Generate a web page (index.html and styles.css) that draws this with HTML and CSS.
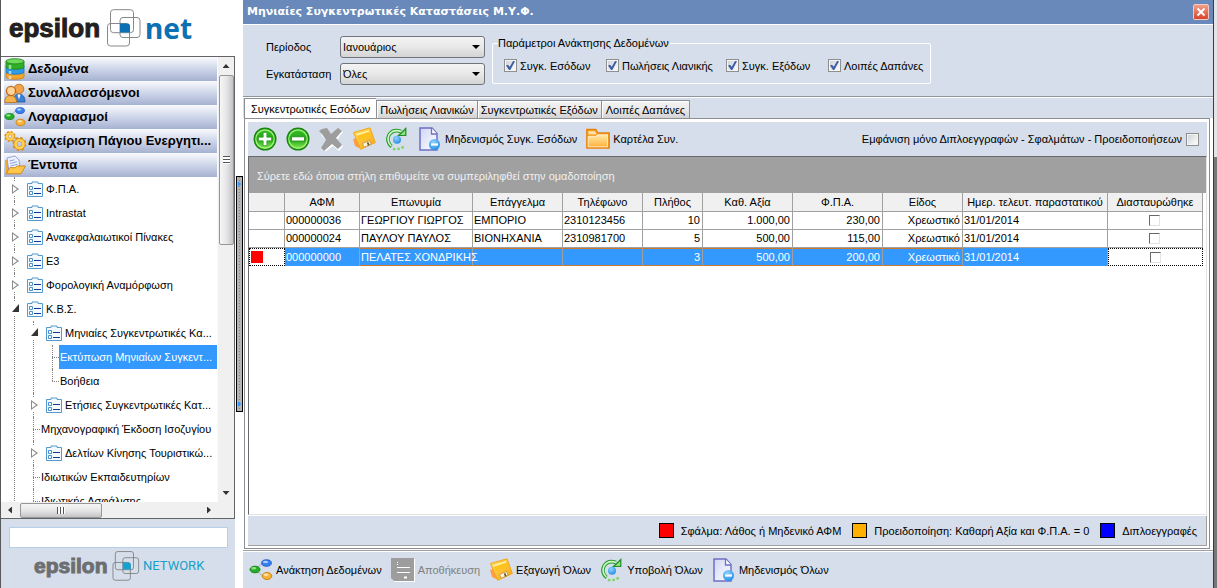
FILE: index.html
```html
<!DOCTYPE html>
<html lang="el">
<head>
<meta charset="utf-8">
<title>Μηνιαίες Συγκεντρωτικές Καταστάσεις Μ.Υ.Φ.</title>
<link rel="stylesheet" href="styles.css">
</head>
<body>
<svg class="sprite" aria-hidden="true">
  <defs>
    <linearGradient id="g-green" x1="0" y1="0" x2="0" y2="1"><stop offset="0" stop-color="#3ec531"/><stop offset=".5" stop-color="#1fa314"/><stop offset="1" stop-color="#8df05a"/></linearGradient>
    <linearGradient id="g-gold" x1="0" y1="0" x2="1" y2="1"><stop offset="0" stop-color="#ffe066"/><stop offset="1" stop-color="#f7a50f"/></linearGradient>
    <linearGradient id="g-page" x1="0" y1="0" x2="1" y2="1"><stop offset="0" stop-color="#cfd6f5"/><stop offset="1" stop-color="#ffffff"/></linearGradient>
    <linearGradient id="g-folder" x1="0" y1="0" x2="0" y2="1"><stop offset="0" stop-color="#ffe9a8"/><stop offset="1" stop-color="#ffb23c"/></linearGradient>
    <radialGradient id="g-blue" cx=".4" cy=".3" r=".8"><stop offset="0" stop-color="#8fd3ff"/><stop offset="1" stop-color="#1b86e0"/></radialGradient>
  </defs>
  <symbol id="i-add" viewBox="0 0 24 24"><circle cx="12" cy="12" r="10.8" fill="url(#g-green)" stroke="#17850f" stroke-width="1.4"/><circle cx="12" cy="12" r="9.2" fill="none" stroke="#a5f07c" stroke-width="1.2"/><path d="M10.2 5.500h3.600v4.700h4.700v3.600h-4.700v4.700h-3.600v-4.700H5.500v-3.600h4.700z" fill="#fff" stroke="#1f8d16" stroke-width=".6"/></symbol>
  <symbol id="i-minus" viewBox="0 0 24 24"><circle cx="12" cy="12" r="10.8" fill="url(#g-green)" stroke="#17850f" stroke-width="1.4"/><circle cx="12" cy="12" r="9.2" fill="none" stroke="#a5f07c" stroke-width="1.2"/><path d="M5.500 9.800h13v4.200h-13z" fill="#fff" stroke="#1f8d16" stroke-width=".8"/></symbol>
  <symbol id="i-delete" viewBox="0 0 24 24"><path d="M1 4l5-3 6 6 7-6 4 3-6 8 6 6-4 5-6-5-8 6-4-3 6-8-5-5z" transform="translate(1 1)" fill="#fff"/><path d="M0 4l3-2 5-1 4 6 7-6 4 3-6 7 6 7-4 4-6-5-8 7-3-3 5-8-4-6z" fill="#9d9d9d"/></symbol>
  <symbol id="i-save" viewBox="0 0 24 24"><path d="M1 12l4-1 5 9-3 1-4-2z" fill="#ff9d45"/><path d="M1.500 5.500L18 .8l5.300 14.700-14.800 6.800z" fill="url(#g-gold)" stroke="#f3a617"/><path d="M4 7L17 3l2.300 6-12 5z" fill="#ffc21f"/><path d="M4 7L17 3l.6 1.500L4.800 8.800z" fill="#fff3a6"/><path d="M10.500 16.500l7-3 1.700 3.700-7 3z" fill="#fff6da" stroke="#a87a20" stroke-width=".6"/><path d="M14.800 15.800l1.600-.7 1.200 2.900-1.600.7z" fill="#6b552c"/></symbol>
  <symbol id="i-refresh" viewBox="0 0 24 24"><path d="M6.500 19.500A9 9 0 0 1 4 8Q8 1.500 16 4.500" fill="none" stroke="#259c2c" stroke-width="3.600"/><path d="M6.300 19A9 9 0 0 1 4 8Q8 1.700 16 4.500" fill="none" stroke="#d2f7c6" stroke-width="1.600"/><path d="M20.800 1.500v7H13.500l3-2.800z" fill="#8fe07a" stroke="#1e8e26" stroke-width="1.200"/><circle cx="12" cy="12.800" r="4" fill="url(#g-blue)"/><path d="M8 21.800q6 1.500 12-3" fill="none" stroke="#7bd35c" stroke-width="2.400" stroke-dasharray="2.400 2"/></symbol>
  <symbol id="i-page" viewBox="0 0 24 24"><path d="M2 1h12l5 5.500V23H2z" fill="url(#g-page)" stroke="#6d6fc4" stroke-width="1.500"/><path d="M13.500 1v6H19" fill="#fff" stroke="#6d6fc4" stroke-width="1.300"/><circle cx="16.500" cy="17.500" r="5.500" fill="url(#g-blue)"/><path d="M13 17.500h7" stroke="#fff" stroke-width="2.200"/></symbol>
  <symbol id="i-folder" viewBox="0 0 24 24"><path d="M.8 21V2.500h9l2 3.500h11.400v15z" fill="#f7a52d" stroke="#e5820c" stroke-width="1.300"/><path d="M2.500 4.200h6.500l1.500 3H2.500z" fill="#ffe2ad"/><path d="M2.200 9.500h7.500l2-1.700h9.800v12H2.200z" fill="url(#g-folder)" stroke="#fff4d8" stroke-width=".8"/></symbol>
  <symbol id="i-nodes" viewBox="0 0 24 24"><path d="M17 5.500C11 5 10 8 8 12c2 4 4 6 9 6" fill="none" stroke="#b9c4cf" stroke-width="1.600"/><ellipse cx="6" cy="11.500" rx="5" ry="3.300" fill="#27ab2a" stroke="#14851a"/><ellipse cx="4.800" cy="10.300" rx="2.500" ry="1.200" fill="#8be57e"/><ellipse cx="17.500" cy="5" rx="4.800" ry="3.200" fill="#3c7ff0" stroke="#215cc9"/><ellipse cx="16.500" cy="3.900" rx="2.500" ry="1.200" fill="#acd0ff"/><ellipse cx="18" cy="18" rx="4.800" ry="3.500" fill="#f6b13a" stroke="#cf8213"/><ellipse cx="17" cy="16.800" rx="2.500" ry="1.200" fill="#ffe3a4"/></symbol>
  <symbol id="i-disk" viewBox="0 0 24 24"><path d="M1 1h23v23H3z" fill="#fff"/><path d="M0 0h23v23H3l-3-3z" fill="#9d9d9d"/><path d="M6 9.500h13M6 14.500h13" stroke="#fff"/><path d="M13 18.500h3v2h-3zM6 4h1v1H6zM6 6h1v1H6z" fill="#fff"/></symbol>
  <symbol id="i-db" viewBox="0 0 20 22"><path d="M1 14h18v5c0 3-18 3-18 0z" fill="#f2a72c" stroke="#c77d12" stroke-width=".8"/><path d="M1 8h18v6c0 3-18 3-18 0z" fill="#2f9be6" stroke="#1a6fb5" stroke-width=".8"/><path d="M1 3h18v6c0 3-18 3-18 0z" fill="#2fae28" stroke="#1b8418" stroke-width=".8"/><ellipse cx="10" cy="3.300" rx="9" ry="2.600" fill="#6fd95a" stroke="#1b8418" stroke-width=".8"/><path d="M5 7v4M5 13v3M5 18v3" stroke="#ffffff90" stroke-width="2.500"/></symbol>
  <symbol id="i-users" viewBox="0 0 22 20"><path d="M9 19c0-6 3-8 6-8s6 2 6 8z" fill="#3d7fd0" stroke="#1e5aa3" stroke-width=".8"/><circle cx="15" cy="6" r="4.800" fill="#f1a24a" stroke="#b96614" stroke-width=".8"/><path d="M13.500 11.500l1.500 5 1.500-5z" fill="#fff"/><path d="M.8 19.500c0-6 3-7 5.700-7s6 1.500 6 7z" fill="#f5b34d" stroke="#bf6d14" stroke-width=".8"/><circle cx="7" cy="8" r="4.600" fill="#ffd29a" stroke="#bf6d14" stroke-width="1.300"/></symbol>
  <symbol id="i-gears" viewBox="0 0 22 20"><circle cx="6" cy="5.500" r="4.600" fill="none" stroke="#dd8f10" stroke-width="2" stroke-dasharray="2 1.610"/><circle cx="6" cy="5.500" r="3.100" fill="none" stroke="#dd8f10" stroke-width="3"/><circle cx="6" cy="5.500" r="3" fill="none" stroke="#ffd35a" stroke-width="2"/><circle cx="15.500" cy="13" r="6" fill="none" stroke="#dd8f10" stroke-width="2.200" stroke-dasharray="2.500 2.210"/><circle cx="15.500" cy="13" r="4.200" fill="none" stroke="#dd8f10" stroke-width="3.800"/><circle cx="15.500" cy="13" r="4" fill="none" stroke="#ffd35a" stroke-width="2.500"/></symbol>
  <symbol id="i-forms" viewBox="0 0 22 20"><path d="M1 5h4l2 13H2z" fill="#e9a63b"/><path d="M3 3l8-2 4 4 1 9-11 3z" fill="#eef2ff" stroke="#8b9ad0" stroke-width=".9"/><path d="M5.500 6l5-1.200M6 8.500l7-1.700M6.500 11l7-1.700" stroke="#8fa0d6"/><path d="M2 18.800l4-6.300 5 .3 2-1.800h8.500L17 18.800z" fill="#ffc64a" stroke="#c8841a" stroke-width=".9"/></symbol>
  <symbol id="i-list" viewBox="0 0 16 16"><path d="M.5 15.500V2.500h4.500v-1.500h6v1.500h4.500v13z" fill="#f5faff" stroke="#559bcf"/><path d="M2.500 5.500h3v3h-3zM2.500 10.500h3v3h-3z" fill="#fff" stroke="#4b93cb"/><path d="M7 7.500h7M7 12.500h7" stroke="#123c94"/></symbol>
  <symbol id="i-brand" viewBox="0 0 34 38"><g fill="none" stroke="currentColor"><rect x="3.500" y=".7" width="23" height="23" rx="3"/><rect x="13" y="8.500" width="20" height="20" rx="3"/><rect x=".5" y="14.500" width="22" height="22.500" rx="3"/></g><path d="M13 14.500h7q3 0 3 3v6H13z"/></symbol>
</svg>

<div class="app">
  <aside class="sidebar">
    <div class="brand">
      <span class="brand-name">epsilon</span>
      <svg class="brand-mark"><use href="#i-brand"/></svg>
      <span class="brand-suffix">net</span>
    </div>

    <div class="tree-box">
      <div class="tree-main">
        <nav class="tree" aria-label="Μενού">
          <ul class="groups">
            <li><button class="group"><svg><use href="#i-db"/></svg>Δεδομένα</button></li>
            <li><button class="group"><svg><use href="#i-users"/></svg>Συναλλασσόμενοι</button></li>
            <li><button class="group"><svg><use href="#i-nodes"/></svg>Λογαριασμοί</button></li>
            <li><button class="group"><svg><use href="#i-gears"/></svg>Διαχείριση Πάγιου Ενεργητι...</button></li>
            <li><button class="group"><svg><use href="#i-forms"/></svg>Έντυπα</button></li>
          </ul>
          <ul class="nodes">
            <li><a class="node" href="#"><i class="toggle"></i><svg><use href="#i-list"/></svg><span>Φ.Π.Α.</span></a></li>
            <li><a class="node" href="#"><i class="toggle"></i><svg><use href="#i-list"/></svg><span>Intrastat</span></a></li>
            <li><a class="node" href="#"><i class="toggle"></i><svg><use href="#i-list"/></svg><span>Ανακεφαλαιωτικοί Πίνακες</span></a></li>
            <li><a class="node" href="#"><i class="toggle"></i><svg><use href="#i-list"/></svg><span>Ε3</span></a></li>
            <li><a class="node" href="#"><i class="toggle"></i><svg><use href="#i-list"/></svg><span>Φορολογική Αναμόρφωση</span></a></li>
            <li><a class="node" href="#"><i class="toggle open"></i><svg><use href="#i-list"/></svg><span>Κ.Β.Σ.</span></a>
              <ul class="nodes">
                <li><a class="node" href="#"><i class="toggle open"></i><svg><use href="#i-list"/></svg><span>Μηνιαίες Συγκεντρωτικές Κα...</span></a>
                  <ul class="nodes last-level">
                    <li><a class="node leaf current" href="#"><span>Εκτύπωση Μηνιαίων Συγκεντ...</span></a></li>
                    <li><a class="node leaf" href="#"><span>Βοήθεια</span></a></li>
                  </ul>
                </li>
                <li><a class="node" href="#"><i class="toggle"></i><svg><use href="#i-list"/></svg><span>Ετήσιες Συγκεντρωτικές Κατ...</span></a></li>
                <li><a class="node leaf" href="#"><span>Μηχανογραφική Έκδοση Ισοζυγίου</span></a></li>
                <li><a class="node" href="#"><i class="toggle"></i><svg><use href="#i-list"/></svg><span>Δελτίων Κίνησης Τουριστικώ...</span></a></li>
                <li><a class="node leaf" href="#"><span>Ιδιωτικών Εκπαιδευτηρίων</span></a></li>
                <li><a class="node leaf" href="#"><span>Ιδιωτικής Ασφάλισης</span></a></li>
              </ul>
            </li>
          </ul>
        </nav>
        <div class="vscroll"><i class="arr up"></i><div class="vthumb"><i class="grip"></i></div><i class="arr down"></i></div>
      </div>
      <div class="hscroll"><i class="arr left"></i><div class="hthumb"><i class="grip side"></i></div><i class="arr right"></i></div>
    </div>

    <div class="side-foot">
      <input class="search" type="text" aria-label="Αναζήτηση">
      <div class="brand small">
        <span class="brand-name">epsilon</span>
        <svg class="brand-mark"><use href="#i-brand"/></svg>
        <span class="brand-suffix">NETWORK</span>
      </div>
    </div>
  </aside>

  <div class="splitter"><div class="handle"><i></i><i></i></div></div>

  <main class="main">
    <header class="titlebar">
      <h1>Μηνιαίες Συγκεντρωτικές Καταστάσεις Μ.Υ.Φ.</h1>
      <button class="close" aria-label="Κλείσιμο"><svg viewBox="0 0 16 16"><path d="M4 4l8 8M12 4l-8 8" stroke="#fff" stroke-width="2.200"/></svg></button>
    </header>

    <section class="params">
      <div class="selects">
        <label for="period">Περίοδος</label>
        <div class="combo"><select id="period"><option>Ιανουάριος</option></select></div>
        <label for="branch">Εγκατάσταση</label>
        <div class="combo"><select id="branch"><option>Όλες</option></select></div>
      </div>
      <fieldset class="options">
        <legend>Παράμετροι Ανάκτησης Δεδομένων</legend>
        <label><input class="check" type="checkbox" checked>Συγκ. Εσόδων</label>
        <label><input class="check" type="checkbox" checked>Πωλήσεις Λιανικής</label>
        <label><input class="check" type="checkbox" checked>Συγκ. Εξόδων</label>
        <label><input class="check" type="checkbox" checked>Λοιπές Δαπάνες</label>
      </fieldset>
    </section>

    <div class="tabs" role="tablist">
      <button class="tab active" role="tab" aria-selected="true">Συγκεντρωτικές Εσόδων</button>
      <button class="tab" role="tab">Πωλήσεις Λιανικών</button>
      <button class="tab" role="tab">Συγκεντρωτικές Εξόδων</button>
      <button class="tab" role="tab">Λοιπές Δαπάνες</button>
    </div>

    <section class="page">
      <div class="toolbar">
        <button class="tool" aria-label="Προσθήκη"><svg><use href="#i-add"/></svg></button>
        <button class="tool" aria-label="Αφαίρεση"><svg><use href="#i-minus"/></svg></button>
        <button class="tool" aria-label="Διαγραφή"><svg><use href="#i-delete"/></svg></button>
        <button class="tool" aria-label="Εξαγωγή"><svg><use href="#i-save"/></svg></button>
        <button class="tool" aria-label="Υποβολή"><svg><use href="#i-refresh"/></svg></button>
        <button class="tool"><svg><use href="#i-page"/></svg>Μηδενισμός Συγκ. Εσόδων</button>
        <button class="tool"><svg><use href="#i-folder"/></svg>Καρτέλα Συν.</button>
        <label class="filter">Εμφάνιση μόνο Διπλοεγγραφών - Σφαλμάτων - Προειδοποιήσεων<input class="check" type="checkbox"></label>
      </div>

      <div class="grid">
        <div class="groupbar">Σύρετε εδώ όποια στήλη επιθυμείτε να συμπεριληφθεί στην ομαδοποίηση</div>
        <table>
          <colgroup><col class="c36"><col class="c75"><col class="c113"><col class="c90"><col class="c80"><col class="c60"><col class="c90"><col class="c90"><col class="c80"><col class="c145"><col class="c95"></colgroup>
          <thead>
            <tr><th></th><th>ΑΦΜ</th><th>Επωνυμία</th><th>Επάγγελμα</th><th>Τηλέφωνο</th><th>Πλήθος</th><th>Καθ. Αξία</th><th>Φ.Π.Α.</th><th>Είδος</th><th>Ημερ. τελευτ. παραστατικού</th><th>Διασταυρώθηκε</th></tr>
          </thead>
          <tbody>
            <tr><td></td><td>000000036</td><td>ΓΕΩΡΓΙΟΥ ΓΙΩΡΓΟΣ</td><td>ΕΜΠΟΡΙΟ</td><td>2310123456</td><td class="num">10</td><td class="num">1.000,00</td><td class="num">230,00</td><td class="num">Χρεωστικό</td><td>31/01/2014</td><td class="mid"><input class="cell-check" type="checkbox" aria-label="Διασταυρώθηκε"></td></tr>
            <tr><td></td><td>000000024</td><td>ΠΑΥΛΟΥ ΠΑΥΛΟΣ</td><td>ΒΙΟΝΗΧΑΝΙΑ</td><td>2310981700</td><td class="num">5</td><td class="num">500,00</td><td class="num">115,00</td><td class="num">Χρεωστικό</td><td>31/01/2014</td><td class="mid"><input class="cell-check" type="checkbox" aria-label="Διασταυρώθηκε"></td></tr>
            <tr class="selected"><td class="plain"><i class="mark"></i></td><td>000000000</td><td>ΠΕΛΑΤΕΣ ΧΟΝΔΡΙΚΗΣ</td><td></td><td></td><td class="num">3</td><td class="num">500,00</td><td class="num">200,00</td><td class="num">Χρεωστικό</td><td>31/01/2014</td><td class="mid plain"><input class="cell-check" type="checkbox" aria-label="Διασταυρώθηκε"></td></tr>
          </tbody>
        </table>
      </div>

      <div class="legend">
        <span><i class="swatch red"></i>Σφάλμα: Λάθος ή Μηδενικό ΑΦΜ</span>
        <span><i class="swatch amber"></i>Προειδοποίηση: Καθαρή Αξία και Φ.Π.Α. = 0</span>
        <span><i class="swatch blue"></i>Διπλοεγγραφές</span>
      </div>
    </section>

    <footer class="actions">
      <button class="tool"><svg><use href="#i-nodes"/></svg>Ανάκτηση Δεδομένων</button>
      <button class="tool" disabled><svg><use href="#i-disk"/></svg>Αποθήκευση</button>
      <button class="tool"><svg><use href="#i-save"/></svg>Εξαγωγή Όλων</button>
      <button class="tool"><svg><use href="#i-refresh"/></svg>Υποβολή Όλων</button>
      <button class="tool"><svg><use href="#i-page"/></svg>Μηδενισμός Όλων</button>
    </footer>
  </main>
  <div class="edge"></div>
</div>
</body>
</html>
```

FILE: styles.css
```css
* { box-sizing: border-box; }
body {
  margin: 0;
  color: #000;
  background: #fff;
  font: 11px/14px "Liberation Sans", "Noto Sans", sans-serif;
}
button, input, select { font: inherit; color: inherit; }
button { margin: 0; padding: 0; border: 0; background: none; }
ul { margin: 0; padding: 0; list-style: none; }
i { display: block; flex: none; }
svg { display: block; flex: none; }
.sprite { position: absolute; width: 0; height: 0; }

.app { display: flex; height: 100vh; }

/* sidebar */
.sidebar {
  display: flex;
  flex-direction: column;
  flex: none;
  width: 235px;
  border-left: 1px solid #58585c;
}
.brand { display: flex; align-items: center; height: 56px; padding-left: 8px; }
.brand-name {
  width: 98px;
  color: #231f20;
  font: bold 26px/32px "Liberation Sans", sans-serif;
  -webkit-text-stroke: 1px currentColor;
}
.brand-mark { width: 34px; height: 38px; color: #888; fill: #0d70b3; }
.brand-suffix { padding-left: 4px; color: #0d70b3; font: bold 28px/36px "Noto Sans", sans-serif; }
.brand.small { height: 36px; padding-left: 25px; }
.small .brand-name { width: 78px; color: #6d6e71; font-size: 21px; }
.small .brand-mark { width: 28px; height: 30px; fill: #17a0d2; color: #777; }
.small .brand-suffix { padding-left: 3px; color: #17a0c8; font: 13px/20px Roboto, sans-serif; }

.tree-box {
  display: flex;
  flex: 1;
  flex-direction: column;
  min-height: 0;
  border: 1px solid #646464;
  border-left: 0;
}
.tree-main { display: flex; flex: 1; min-height: 0; }
.tree { flex: 1; min-width: 0; padding-left: 3px; overflow: hidden; }
.group {
  display: flex;
  align-items: center;
  width: 100%;
  height: 24px;
  gap: 2px;
  background: linear-gradient(#fafbfe, #cdd5e8 50%, #a6b2d2);
  font: bold 13px/20px "Liberation Sans", sans-serif;
  white-space: nowrap;
}
.group svg { width: 22px; height: 22px; }
.nodes li { position: relative; }
.nodes li::before {
  content: "";
  position: absolute;
  top: 0;
  bottom: 0;
  left: 10px;
  border-left: 1px dotted #808080;
}
.last-level li:last-child::before { bottom: 50%; }
.nodes .nodes { padding-left: 19px; }
.node {
  position: relative;
  display: flex;
  align-items: center;
  height: 24px;
  color: #000;
  text-decoration: none;
  white-space: nowrap;
}
.node svg { width: 16px; height: 16px; margin: 0 3px 0 5px; }
.toggle { width: 18px; height: 14px; padding: 2px 0 0 8px; background: #fff; }
.toggle::before {
  content: "";
  display: block;
  width: 7px;
  height: 10px;
  background: #8c8c8c;
  clip-path: polygon(0 0, 100% 50%, 0 100%, 0 0, 1px 2px, 1px 8px, 5px 5px, 1px 2px);
}
.toggle.open::before { height: 8px; background: #333; clip-path: polygon(100% 0, 100% 100%, 0 100%); }
.leaf { padding-left: 17px; }
.leaf::before {
  content: "";
  position: absolute;
  left: 10px;
  top: 12px;
  width: 7px;
  border-top: 1px dotted #808080;
}
.leaf span { flex: 1; padding-left: 1px; line-height: 24px; }
.current span { background: #39f; color: #fff; }

.vscroll {
  display: flex;
  flex-direction: column;
  align-items: center;
  width: 17px;
  background: #f0f0f0;
  border-left: 1px solid #fafafa;
}
.vthumb {
  display: flex;
  align-items: center;
  justify-content: center;
  width: 15px;
  height: 170px;
  border: 1px solid #979797;
  border-radius: 2px;
  background: linear-gradient(90deg, #f6f6f6, #e6e6e8 50%, #c4c4c8);
}
.grip { width: 7px; height: 8px; background: repeating-linear-gradient(#555 0 1px, #fff 1px 3px); }
.grip.side { width: 8px; height: 7px; background: repeating-linear-gradient(90deg, #555 0 1px, #fff 1px 3px); }
.arr { width: 7px; height: 4px; background: #333; }
.arr.up { margin: 7px 0; clip-path: polygon(50% 0, 100% 100%, 0 100%); }
.arr.down { margin: auto 0 7px; clip-path: polygon(0 0, 100% 0, 50% 100%); }
.hscroll { display: flex; align-items: center; height: 16px; padding-right: 23px; background: #f0f0f0; }
.hthumb {
  display: flex;
  align-items: center;
  justify-content: center;
  width: 82px;
  height: 15px;
  border: 1px solid #979797;
  border-radius: 2px;
  background: linear-gradient(#f6f6f6, #e6e6e8 50%, #c4c4c8);
}
.arr.left, .arr.right { width: 4px; height: 7px; }
.arr.left { margin: 0 8px 0 7px; clip-path: polygon(100% 0, 100% 100%, 0 50%); }
.arr.right { margin-left: auto; clip-path: polygon(0 0, 100% 50%, 0 100%); }

.side-foot { padding: 8px 7px 4px 8px; background: #d5deea; }
.search { display: block; width: 100%; height: 21px; border: 1px solid #b5cfe8; background: #fff; }

.splitter { display: flex; align-items: center; justify-content: center; flex: none; width: 8px; }
.handle {
  display: flex;
  flex-direction: column;
  justify-content: space-between;
  width: 7px;
  height: 236px;
  padding: 4px 0;
  border: 1px solid #000;
  background: repeating-linear-gradient(#39f 0 1px, #b4b4b4 1px 3px) center / 1px 100% no-repeat #b4b4b4;
}
.handle i { width: 4px; height: 6px; margin-left: 1px; background: #39f; clip-path: polygon(0 0, 100% 50%, 0 100%); }

/* main window */
.main { display: flex; flex: 1; flex-direction: column; min-width: 0; }
.titlebar {
  display: flex;
  align-items: center;
  justify-content: space-between;
  height: 25px;
  padding: 0 4px;
  border-bottom: 1px solid #fff;
  background: #6889b9;
}
.titlebar h1 { margin: 0; color: #fff; font: bold 11px/16px "DejaVu Sans", sans-serif; }
.close { width: 16px; height: 16px; border: 1px solid #f3c9c0; border-radius: 2px; background: linear-gradient(#f0a08a, #d9432a); }
.close svg { width: 14px; height: 14px; }

.params {
  display: flex;
  align-items: flex-start;
  gap: 7px;
  padding: 11px 0 11px 23px;
  border-bottom: 1px solid #8f959e;
  background: #d5deea;
}
.selects { display: grid; grid-template-columns: 74px 145px; row-gap: 5px; align-items: center; }
.combo { position: relative; }
.combo select {
  display: block;
  width: 100%;
  height: 22px;
  padding: 0 2px;
  border: 1px solid #70757c;
  border-radius: 3px;
  background: linear-gradient(#f4f4f4, #e8e8e8 50%, #d4d4d4);
  appearance: none;
}
.combo::after {
  content: "";
  position: absolute;
  right: 5px;
  top: 9px;
  border: 4px solid transparent;
  border-top-color: #000;
  border-bottom: 0;
}
.options {
  display: grid;
  grid-template-columns: 102px 120px 102px 98px;
  width: 439px;
  height: 48px;
  margin: 0;
  padding: 9px 0 0 11px;
  border: 1px solid #fff;
  border-radius: 2px;
}
.options legend { margin-left: -6px; padding: 0 1px 0 0; }
.options label { display: flex; align-items: flex-start; gap: 3px; white-space: nowrap; }
.check {
  display: block;
  flex: none;
  position: relative;
  width: 13px;
  height: 13px;
  margin: 0;
  border: 1px solid #8e8f8f;
  background: linear-gradient(135deg, #cbcfd5, #f6f6f6 80%);
  box-shadow: inset 0 0 0 1px #f4f4f4;
  appearance: none;
}
.check:checked::after {
  content: "";
  position: absolute;
  left: 1px;
  top: 1px;
  width: 9px;
  height: 9px;
  background: #3f5ea6;
  clip-path: polygon(0 50%, 22% 42%, 42% 64%, 78% 0, 100% 4%, 48% 100%, 34% 100%);
}

.tabs {
  display: flex;
  align-items: flex-end;
  height: 20px;
  margin-top: 1px;
  padding-left: 1px;
  background: #d5deea;
}
.tab {
  height: 18px;
  padding: 0 3px;
  border: 1px solid #8c8e94;
  border-bottom: 0;
  border-right: 0;
  background: linear-gradient(#f4f4f4, #e9e9e9 50%, #d3d3d3);
  box-shadow: inset 1px 1px #fff;
  white-space: nowrap;
}
.tab:last-child { padding: 0 4px; border-right: 1px solid #8c8e94; }
.tab.active { align-self: stretch; height: auto; padding: 0 6px; background: #fff; line-height: 18px; }

.page {
  display: flex;
  flex: 1;
  flex-direction: column;
  min-height: 0;
  margin: 0 3px 1px 1px;
  padding: 3px 2px 2px 3px;
  border: 1px solid #8c8e94;
}
.toolbar, .actions { display: flex; align-items: center; background: #d5deea; }
.toolbar { height: 34px; flex: none; gap: 9px; padding: 0 8px 0 5px; }
.tool { display: flex; align-items: center; gap: 3px; white-space: nowrap; }
.tool svg { width: 24px; height: 24px; }
.tool:disabled { color: #808080; }
.filter { display: flex; align-items: center; gap: 4px; margin-left: auto; white-space: nowrap; }

.grid {
  flex: 1;
  min-height: 0;
  overflow: hidden;
  border: 1px solid #e3e3e3;
  border-top: 1px solid #69696b;
  border-left: 1px solid #69696b;
}
.groupbar { height: 36px; padding: 0 8px; background: #a0a0a0; color: #f0f0f0; line-height: 38px; }
table { width: 954px; border-collapse: separate; border-spacing: 0; table-layout: fixed; }
.c36 { width: 36px; }
.c60 { width: 60px; }
.c75 { width: 75px; }
.c80 { width: 80px; }
.c90 { width: 90px; }
.c95 { width: 95px; }
.c113 { width: 113px; }
.c145 { width: 145px; }
th, td {
  height: 18px;
  padding: 0 2px 0 1px;
  border-right: 1px solid #a0a0a0;
  border-bottom: 1px solid #a0a0a0;
  line-height: 17px;
  text-align: left;
  white-space: nowrap;
}
th { height: 19px; padding: 0; background: #f0f0f0; font-weight: normal; line-height: 18px; text-align: center; }
.num { text-align: right; }
.selected td {
  border-top: 1px dotted #d07a2c;
  border-bottom: 1px dotted #d07a2c;
  background: #39f;
  color: #fff;
  line-height: 16px;
}
.selected .plain { border: 1px dotted #000; background: #fff; }
.mark { width: 12px; height: 12px; background: #f00; }
.cell-check {
  display: block;
  width: 11px;
  height: 11px;
  margin: 0 auto;
  border: 1px solid #e3e3e3;
  border-top-color: #696969;
  border-left-color: #696969;
  background: #fff;
  appearance: none;
}

.legend {
  display: flex;
  align-items: center;
  justify-content: flex-end;
  flex: none;
  gap: 11px;
  height: 30px;
  margin-top: 1px;
  padding-right: 9px;
  border-right: 1px solid #a0a0a0;
  border-bottom: 1px solid #a0a0a0;
  background: #d5deea;
}
.legend span { display: flex; align-items: center; gap: 7px; }
.swatch { width: 15px; height: 15px; border: 1px solid #000; }
.red { background: #f00; }
.amber { background: #ffb000; }
.blue { background: #00f; }

.actions { flex: none; gap: 9px; height: 38px; padding-left: 6px; border-top: 1px solid #a0a0a0; box-shadow: inset 0 1px #fff; }
.edge { flex: none; width: 4px; border-left: 1px solid #3c3c3c; background: linear-gradient(#e4e4e4 0 157px, #777 157px); }
```
